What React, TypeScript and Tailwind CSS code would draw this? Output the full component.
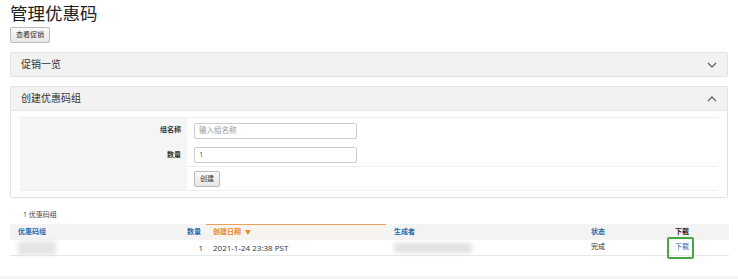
const cjk = "font-['Open_Sans','Noto_Sans_CJK_SC',sans-serif]";

function Chevron({ up }: { up?: boolean }) {
  return (
    <svg width="10" height="6" viewBox="0 0 10 6" className="text-[#666]">
      <polyline
        points={up ? "1,5 5,1 9,5" : "1,1 5,5 9,1"}
        fill="none"
        stroke="currentColor"
        strokeWidth="1.3"
      />
    </svg>
  );
}

function PanelHeader({ title, up }: { title: string; up?: boolean }) {
  return (
    <div className="flex h-[23px] items-center justify-between bg-[#f2f2f2] px-[10px]">
      <span className="text-[10px] text-[#333]">{title}</span>
      <Chevron up={up} />
    </div>
  );
}

export default function App() {
  return (
    <div className={`${cjk} h-[279px] overflow-hidden bg-white px-[10px] pt-[2px] text-[#333]`}>
      <h1 className="text-[17.5px] leading-[22px] text-[#222]">管理优惠码</h1>
      <div className="mt-[3px] flex">
        <button
          className="block h-[16px] rounded-[2px] border border-[#bbb] bg-gradient-to-b from-[#fafafa] to-[#e6e6e6] px-[5px] text-[7px] leading-[14px] text-[#333]"
          type="button"
        >
          查看促销
        </button>
      </div>

      <div className="mt-[9px] rounded-[2px] border border-[#e2e2e2]">
        <PanelHeader title="促销一览" />
      </div>

      <div className="mt-[9px] rounded-[2px] border border-[#e2e2e2]">
        <PanelHeader title="创建优惠码组" up />
        <div className="border-t border-[#e6e6e6] px-[9px] pb-[6px] pt-[6px]">
          <div className="border-y border-[#eee]">
            <div className="grid grid-cols-[167px_1fr]">
              <div className="flex h-[25px] items-center justify-end bg-[#f5f5f5] pr-[6px] text-[7px] font-bold text-[#333]">
                组名称
              </div>
              <div className="flex h-[25px] items-center pl-[7px]">
                <div className="flex h-[16px] w-[163px] items-center rounded-[2px] border border-[#ccc] px-[4px] text-[7.5px] text-[#999]">
                  输入组名称
                </div>
              </div>
              <div className="flex h-[24px] items-center justify-end bg-[#f5f5f5] pr-[6px] text-[7px] font-bold text-[#333]">
                数量
              </div>
              <div className="flex h-[24px] items-center border-b border-[#eee] pl-[7px]">
                <div className="flex h-[16px] w-[163px] items-center rounded-[2px] border border-[#ccc] px-[4px] text-[7.5px] text-[#555]">
                  1
                </div>
              </div>
              <div className="h-[23px] bg-[#f5f5f5]" />
              <div className="flex h-[23px] items-center pl-[7px]">
                <button
                  className="block h-[16px] rounded-[2px] border border-[#bbb] bg-gradient-to-b from-[#fafafa] to-[#e6e6e6] px-[5px] text-[7px] leading-[14px] text-[#333]"
                  type="button"
                >
                  创建
                </button>
              </div>
            </div>
          </div>
        </div>
      </div>

      <div className="mt-[12px] pl-[13px] text-[7px] leading-[10px] text-[#444]">1 优惠码组</div>

      <div className="mt-[4px] w-[719px] text-[7px]">
        <div className="grid h-[16px] grid-cols-[184px_12px_180px_199px_80px_64px] items-stretch bg-[#f3f3f3] font-bold text-[#2a6aad]">
          <div className="flex items-center pl-[8px]">优惠码组</div>
          <div className="-ml-[10px] flex items-center justify-end pr-[5px]">数量</div>
          <div className="flex items-center gap-[4px] border-t border-[#e8a05a] bg-[#f7f3ef] pl-[7px] text-[#e68a2e]">
            创建日期
            <span className="text-[6px]">▼</span>
          </div>
          <div className="flex items-center pl-[8px]">生成者</div>
          <div className="flex items-center pl-[6px]">状态</div>
          <div className="flex items-center pl-[10px] text-[#222]">下载</div>
        </div>
        <div className="grid h-[16px] grid-cols-[184px_12px_180px_199px_80px_64px] items-stretch border-b border-[#e6e6e6] text-[#333]">
          <div className="flex items-center pl-[8px]">
            <div className="h-[14px] w-[38px] rounded-[2px] bg-[#e4e4e4] blur-[2px]" />
          </div>
          <div className="flex items-center justify-end pr-[3px] text-[8px]">1</div>
          <div className="flex items-center pl-[7px] text-[8px]">2021-1-24 23:38 PST</div>
          <div className="flex items-center pl-[8px]">
            <div className="h-[10px] w-[78px] rounded-[3px] bg-[#e2e2e2] blur-[2px]" />
          </div>
          <div className="flex items-center pl-[6px]">完成</div>
          <div className="relative flex items-center pl-[10px] text-[#2a6aad]">
            下载
            <div className="absolute left-[2px] top-[-3px] h-[22px] w-[27px] rounded-[2px] border-2 border-[#45a845]" />
          </div>
        </div>
      </div>

      <div className="-mx-[10px] mt-[20px] h-[10px] bg-[#f5f5f5]" />
    </div>
  );
}
